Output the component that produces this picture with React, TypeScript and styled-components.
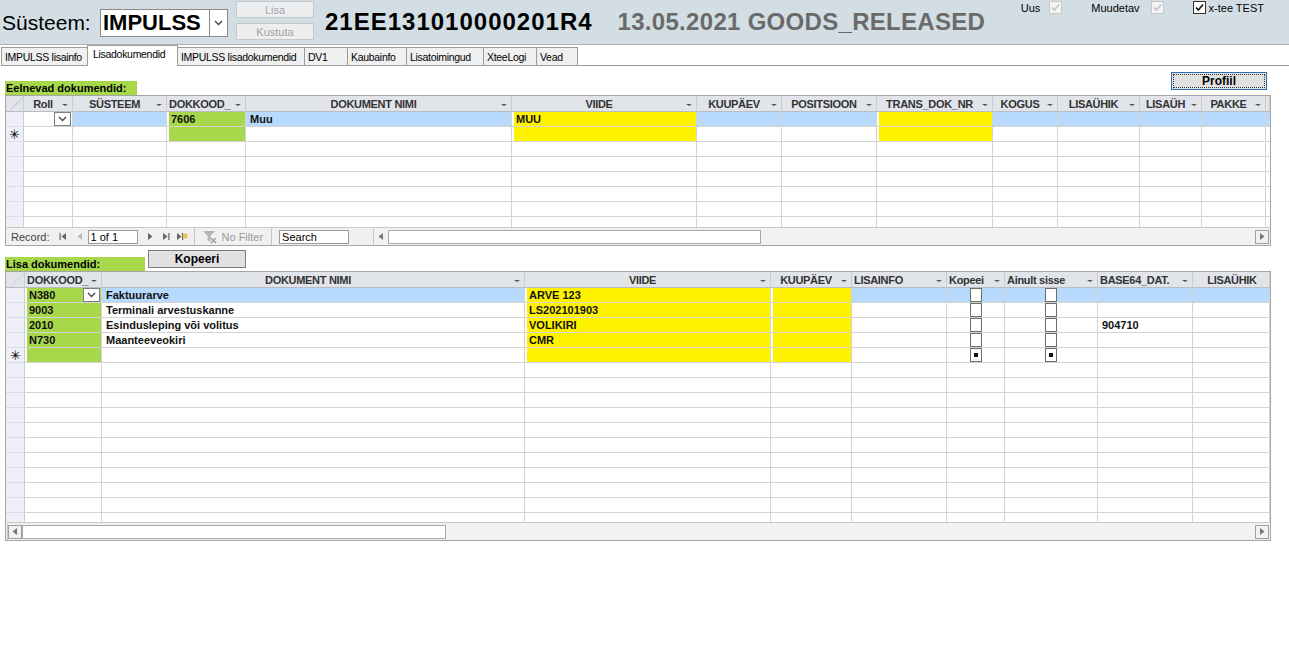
import React from 'react'
import styled, { createGlobalStyle, css } from 'styled-components'

const GlobalStyle = createGlobalStyle`
	html, body {
		margin: 0;
		padding: 0;
		background: #ffffff;
		font-family: 'Liberation Sans', Arial, sans-serif;
		font-size: 11px;
		color: #000;
	}
`

const GREEN = '#a7d84c'
const YELLOW = '#fff200'
const SELECTED = '#b8dbfd'

const Page = styled.div`
	width: 1289px;
	height: 645px;
	overflow: hidden;
	background: #ffffff;
	white-space: nowrap;
`

/* ---------- top bar ---------- */

const TopBar = styled.div`
	height: 44px;
	background: #d3dee4;
	display: flex;
	align-items: center;
	padding-left: 2px;
	box-sizing: border-box;
`

const SystemLabel = styled.div`
	font-size: 21px;
	width: 98px;
	flex: none;
	margin-top: 1px;
`

const Combo = styled.div`
	width: 128px;
	height: 28px;
	flex: none;
	background: #fff;
	border: 1px solid #8a8a8a;
	box-sizing: border-box;
	display: flex;
	align-items: center;
	margin-top: 1px;
`

const ComboText = styled.div`
	flex: 1;
	font-weight: 700;
	font-size: 22px;
	padding-left: 2px;
`

const ComboArrow = styled.div`
	width: 17px;
	height: 26px;
	border-left: 1px solid #8a8a8a;
	display: flex;
	align-items: center;
	justify-content: center;
`

const SmallButtons = styled.div`
	display: flex;
	flex-direction: column;
	gap: 5px;
	margin-left: 8px;
	align-self: flex-start;
	padding-top: 1px;
	flex: none;
`

const GhostButton = styled.div`
	width: 78px;
	height: 17px;
	line-height: 16px;
	box-sizing: border-box;
	text-align: center;
	background: #eceeef;
	border: 1px solid #c5c9cc;
	color: #a3a3a3;
	font-size: 11px;
`

const BigTitle = styled.div<{ $muted?: boolean }>`
	flex: none;
	font-size: 24px;
	font-weight: 700;
	color: ${p => (p.$muted ? '#6a6a6a' : '#000')};
	margin-left: ${p => (p.$muted ? '25px' : '11px')};
	letter-spacing: ${p => (p.$muted ? '0.3px' : '1px')};
`

const Flags = styled.div`
	margin-left: auto;
	align-self: flex-start;
	display: flex;
	align-items: center;
	padding-top: 1px;
	padding-right: 25px;
	font-size: 11px;
	flex: none;
`

const Flag = styled.div<{ $gap: number }>`
	display: flex;
	align-items: center;
	gap: ${p => p.$gap}px;
	margin-left: 29px;
`

const Check = styled.div<{ $disabled?: boolean }>`
	width: 11px;
	height: 11px;
	border: 1px solid ${p => (p.$disabled ? '#c8c8c8' : '#333')};
	background: ${p => (p.$disabled ? '#f4f4f4' : '#fff')};
	display: flex;
	align-items: center;
	justify-content: center;
`

const Tick = ({ color }: { color: string }) => (
	<svg width="9" height="9" viewBox="0 0 9 9">
		<path d="M1 4.5 L3.4 7 L8 1.5" stroke={color} strokeWidth="1.6" fill="none" />
	</svg>
)

/* ---------- tabs ---------- */

const TabStrip = styled.div`
	height: 22px;
	border-top: 1px solid #a9b3b9;
	background: #ffffff;
	display: flex;
	align-items: flex-end;
	padding-left: 1px;
	box-sizing: border-box;
`

const Tab = styled.div<{ $active?: boolean; $w: number }>`
	width: ${p => p.$w}px;
	flex: none;
	overflow: hidden;
	box-sizing: border-box;
	height: ${p => (p.$active ? '21px' : '19px')};
	line-height: ${p => (p.$active ? '17px' : '18px')};
	padding-left: 3px;
	font-size: 10.5px;
	letter-spacing: -0.3px;
	border: 1px solid #9c9c9c;
	border-left: none;
	${p =>
		p.$active
			? css`
					background: #fff;
					border-bottom: none;
					border-left: 1px solid #9c9c9c;
					margin-left: -1px;
					padding-left: 5px;
			  `
			: css`
					background: #f0f0f0;
			  `}
	&:first-child {
		border-left: 1px solid #9c9c9c;
	}
`

const TabRest = styled.div`
	flex: 1;
	height: 19px;
	border-bottom: 1px solid #9c9c9c;
	box-sizing: border-box;
`

/* ---------- content ---------- */

const Content = styled.div`
	padding: 6px 18px 0 5px;
`

const SectionHead = styled.div<{ $h: number }>`
	display: flex;
	align-items: flex-end;
	height: ${p => p.$h}px;
	gap: 3px;
`

const GreenLabel = styled.div<{ $w: number }>`
	width: ${p => p.$w}px;
	height: 14px;
	line-height: 14px;
	background: ${GREEN};
	font-weight: 700;
	padding-left: 1px;
	box-sizing: border-box;
`

const PushButton = styled.div<{ $w: number; $focus?: boolean }>`
	width: ${p => p.$w}px;
	height: 18px;
	line-height: 16px;
	box-sizing: border-box;
	background: #e1e1e1;
	text-align: center;
	font-weight: 700;
	font-size: 12px;
	align-self: flex-start;
	border: 1px solid ${p => (p.$focus ? '#2f6cb0' : '#7c7c7c')};
	${p =>
		p.$focus &&
		css`
			outline: 1px dotted #333;
			outline-offset: -3px;
			margin-left: auto;
			margin-right: 4px;
		`}
`

const Spacer = styled.div<{ $h: number }>`
	height: ${p => p.$h}px;
`

/* ---------- datasheet ---------- */

const Sheet = styled.div`
	border: 1px solid #a5a5a5;
	background: #fff;
	display: flex;
	flex-direction: column;
`

const SheetBody = styled.div<{ $h: number }>`
	height: ${p => p.$h}px;
	overflow: hidden;
`

const Row = styled.div<{ $cols: string; $h: number }>`
	display: grid;
	grid-template-columns: ${p => p.$cols};
	height: ${p => p.$h}px;
`

const HeadCell = styled.div`
	background: #e1e4e9;
	border-right: 1px solid #c9cdd3;
	border-bottom: 1px solid #b9bdc2;
	display: flex;
	align-items: center;
	color: #333;
	font-weight: 700;
	font-size: 11px;
	letter-spacing: -0.3px;
	overflow: hidden;
	padding-left: 2px;
`

const HeadLabel = styled.div<{ $left?: boolean }>`
	flex: 1;
	text-align: ${p => (p.$left ? 'left' : 'center')};
	overflow: hidden;
`

const SortArrow = styled.div`
	width: 10px;
	flex: none;
	margin-right: 2px;
	display: flex;
	justify-content: center;
	&::after {
		content: '';
		border-left: 3px solid transparent;
		border-right: 3px solid transparent;
		border-top: 2px solid #555;
		margin-top: 2px;
	}
`

const Corner = styled.div`
	background: #e1e4e9;
	border-right: 1px solid #c9cdd3;
	border-bottom: 1px solid #b9bdc2;
	background-image: linear-gradient(135deg, transparent 55%, #c8ccd2 56%, transparent 62%);
`

const Selector = styled.div`
	background: #eef0f8;
	border-right: 1px solid #c9cdd3;
	border-bottom: 1px solid #dadde3;
	display: flex;
	align-items: center;
	justify-content: center;
	font-size: 13px;
	line-height: 1;
`

const Cell = styled.div<{ $bg?: string; $bold?: boolean; $center?: boolean }>`
	background: ${p => p.$bg || '#fff'};
	border-right: 1px solid #d4d4d4;
	border-bottom: 1px solid #d4d4d4;
	box-shadow: ${p => (p.$bg === GREEN || p.$bg === YELLOW ? 'inset 2px 0 0 #fff' : 'none')};
	display: flex;
	align-items: center;
	justify-content: ${p => (p.$center ? 'center' : 'flex-start')};
	padding-left: ${p => (p.$center ? '0' : '4px')};
	font-weight: ${p => (p.$bold ? 700 : 400)};
	font-size: 11px;
	color: #111;
	overflow: hidden;
`

const CellDrop = styled.div`
	width: 15px;
	height: 12px;
	margin-left: auto;
	margin-right: 1px;
	border: 1px solid #7d7d7d;
	background: #fff;
	display: flex;
	align-items: center;
	justify-content: center;
`

const GridCheck = styled.div<{ $mark?: boolean }>`
	width: 10px;
	height: 12px;
	border: 1px solid #6c6c6c;
	background: #fff;
	display: flex;
	align-items: center;
	justify-content: center;
	&::after {
		content: '';
		width: 4px;
		height: 4px;
		background: ${p => (p.$mark ? '#111' : 'transparent')};
	}
`

const Chevron = () => (
	<svg width="9" height="6" viewBox="0 0 9 6">
		<path d="M1 1 L4.5 4.5 L8 1" stroke="#444" strokeWidth="1.3" fill="none" />
	</svg>
)

/* ---------- navigation + scroll ---------- */

const NavBar = styled.div`
	height: 18px;
	box-sizing: border-box;
	border-top: 1px solid #c9c9c9;
	background: #f0f0f0;
	display: flex;
	align-items: center;
	color: #444;
	font-size: 11px;
`

const NavText = styled.span<{ $muted?: boolean }>`
	color: ${p => (p.$muted ? '#9a9a9a' : '#444')};
	margin-left: ${p => (p.$muted ? '4px' : '5px')};
`

const NavInput = styled.div<{ $w: number }>`
	width: ${p => p.$w}px;
	height: 14px;
	line-height: 13px;
	border: 1px solid #9a9a9a;
	background: #fff;
	color: #000;
	padding-left: 2px;
	box-sizing: border-box;
`

const NavIcon = styled.div<{ $ml: number }>`
	margin-left: ${p => p.$ml}px;
	display: flex;
	align-items: center;
`

const NavSep = styled.div<{ $ml: number }>`
	width: 1px;
	height: 17px;
	background: #c6c6c6;
	margin-left: ${p => p.$ml}px;
`

const ScrollTrack = styled.div<{ $ml: number }>`
	flex: 1;
	margin-left: ${p => p.$ml}px;
	margin-right: 1px;
	height: 16px;
	background: #f2f2f2;
	display: flex;
	align-items: center;
	border-left: 1px solid #c6c6c6;
`

const ScrollBtn = styled.div<{ $boxed?: boolean }>`
	width: 14px;
	height: 14px;
	box-sizing: border-box;
	border: 1px solid ${p => (p.$boxed ? '#a0a0a0' : 'transparent')};
	display: flex;
	align-items: center;
	justify-content: center;
`

const ScrollThumb = styled.div<{ $w: number }>`
	width: ${p => p.$w}px;
	height: 14px;
	background: #fff;
	border: 1px solid #a8a8a8;
	box-sizing: border-box;
`

const ScrollFill = styled.div`
	flex: 1;
`

const Tri = ({ dir, color = '#666', bar }: { dir: 'l' | 'r'; color?: string; bar?: boolean }) => (
	<svg width="8" height="9" viewBox="0 0 8 9">
		{dir === 'l' ? (
			<>
				{bar && <rect x="0.5" y="1" width="1.2" height="7" fill={color} />}
				<path d={bar ? 'M7 1 L2.5 4.5 L7 8 Z' : 'M6 1 L1.5 4.5 L6 8 Z'} fill={color} />
			</>
		) : (
			<>
				<path d={bar ? 'M1 1 L5.5 4.5 L1 8 Z' : 'M2 1 L6.5 4.5 L2 8 Z'} fill={color} />
				{bar && <rect x="6.3" y="1" width="1.2" height="7" fill={color} />}
			</>
		)}
	</svg>
)

const NewRecordIcon = () => (
	<svg width="12" height="9" viewBox="0 0 12 9">
		<path d="M1 1 L5.5 4.5 L1 8 Z" fill="#666" />
		<rect x="6" y="1" width="1.2" height="7" fill="#666" />
		<path d="M9.5 1 L9.5 7 M7 4 L12 4 M7.8 1.8 L11.2 6.2 M11.2 1.8 L7.8 6.2" stroke="#e8c02a" strokeWidth="1" />
	</svg>
)

const FilterIcon = () => (
	<svg width="16" height="14" viewBox="0 0 16 14">
		<path d="M1 1 L13 1 L8.5 6 L8.5 12 L5.5 10 L5.5 6 Z" fill="#b5b5b5" />
		<path d="M9 8 L14 13 M14 8 L9 13" stroke="#9a9a9a" strokeWidth="1.2" />
	</svg>
)

/* ---------- data ---------- */

type Col = {
	label: string
	w: string
	left?: boolean
	arrow?: boolean
	bg?: string
	bold?: boolean
	check?: boolean
}

type Value = string | { drop: string }

const topCols: Col[] = [
	{ label: 'Roll', w: '49px', arrow: true },
	{ label: 'SÜSTEEM', w: '94px', arrow: true },
	{ label: 'DOKKOOD_', w: '79px', arrow: true, left: true, bg: GREEN, bold: true },
	{ label: 'DOKUMENT NIMI', w: '266px', arrow: true, bold: true },
	{ label: 'VIIDE', w: '185px', arrow: true, bg: YELLOW, bold: true },
	{ label: 'KUUPÄEV', w: '85px', arrow: true },
	{ label: 'POSITSIOON', w: '95px', arrow: true },
	{ label: 'TRANS_DOK_NR', w: '116px', arrow: true, bg: YELLOW },
	{ label: 'KOGUS', w: '65px', arrow: true },
	{ label: 'LISAÜHIK', w: '82px', arrow: true },
	{ label: 'LISAÜH', w: '62px', arrow: true },
	{ label: 'PAKKE', w: '64px', arrow: true },
	{ label: '', w: '1fr' },
]

const topRows: Value[][] = [[{ drop: '' }, '', '7606', 'Muu', 'MUU']]

const bottomCols: Col[] = [
	{ label: 'DOKKOOD_', w: '77px', arrow: true, left: true, bg: GREEN, bold: true },
	{ label: 'DOKUMENT NIMI', w: '423px', arrow: true, bold: true },
	{ label: 'VIIDE', w: '246px', arrow: true, bg: YELLOW, bold: true },
	{ label: 'KUUPÄEV', w: '81px', arrow: true, bg: YELLOW },
	{ label: 'LISAINFO', w: '95px', arrow: true, left: true },
	{ label: 'Kopeei', w: '58px', arrow: true, left: true, check: true },
	{ label: 'Ainult sisse', w: '93px', arrow: true, left: true, check: true },
	{ label: 'BASE64_DAT.', w: '95px', arrow: true, left: true, bold: true },
	{ label: 'LISAÜHIK', w: '1fr' },
]

const bottomRows: Value[][] = [
	[{ drop: 'N380' }, 'Faktuurarve', 'ARVE 123'],
	['9003', 'Terminali arvestuskanne', 'LS202101903'],
	['2010', 'Esindusleping või volitus', 'VOLIKIRI', '', '', '', '', '904710'],
	['N730', 'Maanteeveokiri', 'CMR'],
]

/* ---------- datasheet component ---------- */

type SheetProps = {
	cols: Col[]
	rows: Value[][]
	selWidth: number
	bodyHeight: number
	footer: React.ReactNode
}

const Datasheet = ({ cols, rows, selWidth, bodyHeight, footer }: SheetProps) => {
	const template = [`${selWidth}px`, ...cols.map(c => c.w)].join(' ')
	const fillers = Array.from({ length: 16 })

	const renderCell = (col: Col, value: Value | undefined, kind: 'data' | 'new' | 'empty', selected: boolean, i: number) => {
		if (kind === 'empty') return <Cell key={i} />
		const bg = col.bg || (selected ? SELECTED : undefined)
		if (col.check) {
			return (
				<Cell key={i} $bg={bg} $center>
					<GridCheck $mark={kind === 'new'} />
				</Cell>
			)
		}
		if (value && typeof value === 'object') {
			return (
				<Cell key={i} $bg={col.bg} $bold={col.bold}>
					{value.drop}
					<CellDrop>
						<Chevron />
					</CellDrop>
				</Cell>
			)
		}
		return (
			<Cell key={i} $bg={bg} $bold={col.bold}>
				{value}
			</Cell>
		)
	}

	return (
		<Sheet>
			<Row $cols={template} $h={16}>
				<Corner />
				{cols.map((c, i) => (
					<HeadCell key={i}>
						<HeadLabel $left={c.left}>{c.label}</HeadLabel>
						{c.arrow && <SortArrow />}
					</HeadCell>
				))}
			</Row>
			<SheetBody $h={bodyHeight}>
				{rows.map((r, ri) => (
					<Row key={ri} $cols={template} $h={15}>
						<Selector />
						{cols.map((c, i) => renderCell(c, r[i], 'data', ri === 0, i))}
					</Row>
				))}
				<Row $cols={template} $h={15}>
					<Selector>✳</Selector>
					{cols.map((c, i) => renderCell(c, undefined, 'new', false, i))}
				</Row>
				{fillers.map((_, fi) => (
					<Row key={fi} $cols={template} $h={15}>
						<Selector />
						{cols.map((c, i) => renderCell(c, undefined, 'empty', false, i))}
					</Row>
				))}
			</SheetBody>
			{footer}
		</Sheet>
	)
}

const RecordNav = () => (
	<NavBar>
		<NavText>Record:</NavText>
		<NavIcon $ml={9}>
			<Tri dir="l" bar />
		</NavIcon>
		<NavIcon $ml={9}>
			<Tri dir="l" color="#bbb" />
		</NavIcon>
		<NavIcon $ml={4}>
			<NavInput $w={50}>1 of 1</NavInput>
		</NavIcon>
		<NavIcon $ml={8}>
			<Tri dir="r" />
		</NavIcon>
		<NavIcon $ml={8}>
			<Tri dir="r" bar />
		</NavIcon>
		<NavIcon $ml={6}>
			<NewRecordIcon />
		</NavIcon>
		<NavSep $ml={6} />
		<NavIcon $ml={7}>
			<FilterIcon />
		</NavIcon>
		<NavText $muted>No Filter</NavText>
		<NavSep $ml={8} />
		<NavIcon $ml={7}>
			<NavInput $w={70}>Search</NavInput>
		</NavIcon>
		<ScrollTrack $ml={24}>
			<ScrollBtn>
				<Tri dir="l" color="#777" />
			</ScrollBtn>
			<ScrollThumb $w={373} />
			<ScrollFill />
			<ScrollBtn $boxed>
				<Tri dir="r" color="#777" />
			</ScrollBtn>
		</ScrollTrack>
	</NavBar>
)

const HScroll = () => (
	<NavBar>
		<ScrollTrack $ml={1}>
			<ScrollBtn $boxed>
				<Tri dir="l" color="#777" />
			</ScrollBtn>
			<ScrollThumb $w={424} />
			<ScrollFill />
			<ScrollBtn $boxed>
				<Tri dir="r" color="#777" />
			</ScrollBtn>
		</ScrollTrack>
	</NavBar>
)

const tabs = [
	{ label: 'IMPULSS lisainfo', w: 87 },
	{ label: 'Lisadokumendid', w: 91, active: true },
	{ label: 'IMPULSS lisadokumendid', w: 127 },
	{ label: 'DV1', w: 43 },
	{ label: 'Kaubainfo', w: 59 },
	{ label: 'Lisatoimingud', w: 77 },
	{ label: 'XteeLogi', w: 53 },
	{ label: 'Vead', w: 41 },
]

export default function App() {
	return (
		<Page>
			<GlobalStyle />
			<TopBar>
				<SystemLabel>Süsteem:</SystemLabel>
				<Combo>
					<ComboText>IMPULSS</ComboText>
					<ComboArrow>
						<Chevron />
					</ComboArrow>
				</Combo>
				<SmallButtons>
					<GhostButton>Lisa</GhostButton>
					<GhostButton>Kustuta</GhostButton>
				</SmallButtons>
				<BigTitle>21EE131010000201R4</BigTitle>
				<BigTitle $muted>13.05.2021 GOODS_RELEASED</BigTitle>
				<Flags>
					<Flag $gap={9}>
						Uus
						<Check $disabled>
							<Tick color="#c4c4c4" />
						</Check>
					</Flag>
					<Flag $gap={11}>
						Muudetav
						<Check $disabled>
							<Tick color="#c4c4c4" />
						</Check>
					</Flag>
					<Flag $gap={3}>
						<Check>
							<Tick color="#111" />
						</Check>
						x-tee TEST
					</Flag>
				</Flags>
			</TopBar>

			<TabStrip>
				{tabs.map(t => (
					<Tab key={t.label} $w={t.w} $active={t.active}>
						{t.label}
					</Tab>
				))}
				<TabRest />
			</TabStrip>

			<Content>
				<SectionHead $h={23}>
					<GreenLabel $w={132}>Eelnevad dokumendid:</GreenLabel>
					<PushButton $w={96} $focus>
						Profiil
					</PushButton>
				</SectionHead>
				<Datasheet cols={topCols} rows={topRows} selWidth={18} bodyHeight={115} footer={<RecordNav />} />

				<Spacer $h={4} />
				<SectionHead $h={21}>
					<GreenLabel $w={140}>Lisa dokumendid:</GreenLabel>
					<PushButton $w={98}>Kopeeri</PushButton>
				</SectionHead>
				<Datasheet cols={bottomCols} rows={bottomRows} selWidth={19} bodyHeight={234} footer={<HScroll />} />
			</Content>
		</Page>
	)
}
